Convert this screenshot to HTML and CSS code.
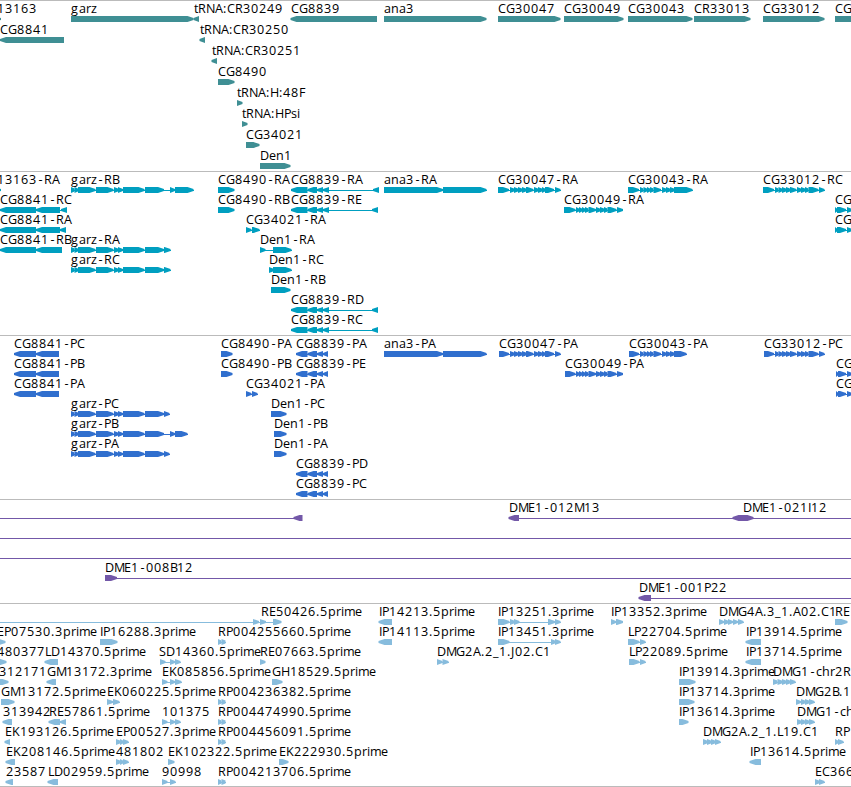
FILE: index.html
```html
<!DOCTYPE html>
<html lang="en">
<head>
    <meta charset="UTF-8">
    <meta name="viewport" content="width=device-width, initial-scale=1.0">
    <title>Genome Map</title>
    <link rel="stylesheet" href="styles.css">
</head>
<body>
    <div class="map">
        <section class="track gene" id="gene"></section>
        <section class="track transcript" id="transcript"></section>
        <section class="track cds" id="cds"></section>
        <section class="track bac" id="bac"></section>
        <section class="track est" id="est"></section>
    </div>
    <script src="script.js"></script>
</body>
</html>
```

FILE: styles.css
```css
body {
    margin: 0;
    background: #fff;
    overflow: hidden;
}
.map {
    width: 851px;
    border-bottom: 1px solid #bbb;
    overflow: hidden;
}
.track {
    display: flex;
    flex-direction: column;
    border-top: 1px solid #bbb;
    padding-bottom: 3px;
}
.row {
    display: block;
    width: 851px;
    height: 20px;
    overflow: visible;
}
.row text {
    font-family: "Open Sans", "Noto Sans", sans-serif;
    font-size: 12.6px;
    fill: #000;
}
.intron {
    shape-rendering: crispEdges;
}
.gene {
    fill: #3f8f94;
    padding-bottom: 2px;
}
.gene .row {
    height: 21px;
}
.transcript {
    fill: #009fc0;
}
.cds {
    fill: #306fce;
}
.bac {
    fill: #7358a8;
}
.est {
    fill: #87bcdd;
    padding-bottom: 2px;
}
```

FILE: script.js
```js
const NS = "http://www.w3.org/2000/svg";
const BAR_TOP = 15;
const BASELINE = 12;

// glyph advances in px, everything else is 8
const advance = {
    G: 9, M: 10, N: 9, D: 9, H: 9, E: 7, P: 7, B: 7, F: 7, S: 7, L: 6, I: 3, J: 4,
    a: 7, e: 7, c: 6, r: 5, z: 6, s: 6, t: 4, i: 3, m: 11, "-": 7, ".": 4, ":": 4, _: 6
};

const garz = [71, 74.5, 74.5, 78, 78, 95.5, 96, 113.5, 114, 118, 118, 123, 123, 144.5, 145, 164];
const cg8839 = [291, 307.5, 307.5, 317, 317, 323, 323, 329];
const cg8839p = [296, 307.5, 307.5, 317, 317, 323, 323, 328];
const mid47 = [510, 514, 514, 518, 518, 522, 522, 526, 526, 533.5, 534, 538, 538, 542, 542, 545, 545, 554, 555, 560.5];
const mid43 = [640, 643.5, 643.5, 647, 647, 650, 650, 653.5, 653.5, 661, 662, 666, 666, 670, 670, 674];
const mid49 = [576, 579, 579, 582, 582, 585, 585, 588.5, 588.5, 596, 596, 600, 600, 604, 604, 607.5, 607.5, 616.5, 617, 623];
const mid12 = [775, 778.5, 778.5, 782, 782, 786, 786, 790, 790, 796.5, 797, 801, 801, 805, 805, 808.5, 808.5, 818.5, 819, 824.5];
const est218 = [218, 221.5, 221.5, 225.5];

// feature: [label, label x, strand, [start, end, start, end, ...], line start, line end]
const tracks = {
    gene: [
        [["13163", -3, 1, [-8, 1]], ["garz", 71, 1, [71, 193.5]], ["tRNA:CR30249", 194, -1, [193.5, 199]],
         ["CG8839", 291, -1, [290.5, 377]], ["ana3", 384, 1, [384, 486.5]], ["CG30047", 498, 1, [498, 560.5]],
         ["CG30049", 564, 1, [564, 623.5]], ["CG30043", 628, 1, [628, 692.5]], ["CR33013", 694, 1, [694, 750.5]],
         ["CG33012", 763, 1, [763, 824.5]], ["CG", 835, 1, [835, 870]]],
        [["CG8841", 0, -1, [0, 64]], ["tRNA:CR30250", 200, -1, [199.5, 205]]],
        [["tRNA:CR30251", 212, -1, [211.5, 217]]],
        [["CG8490", 218, 1, [218, 234.5]]],
        [["tRNA:H:48F", 237, 1, [237, 242.5]]],
        [["tRNA:HPsi", 242, 1, [242, 247.5]]],
        [["CG34021", 246, 1, [246, 259.5]]],
        [["Den1", 260, 1, [260, 290.5]]]
    ],
    transcript: [
        [["13163-RA", -3, 1, [-8, 1]], ["garz-RB", 71, 1, [...garz, 170, 175, 175, 193.5]],
         ["CG8490-RA", 218, 1, [218, 234.5]], ["CG8839-RA", 291, -1, [...cg8839, 373, 379]],
         ["ana3-RA", 384, 1, [384, 443, 443, 486.5]], ["CG30047-RA", 498, 1, [498, 509, ...mid47]],
         ["CG30043-RA", 628, 1, [628, 639, ...mid43, 674, 692.5]], ["CG33012-RC", 763, 1, [763, 774, ...mid12]]],
        [["CG8841-RC", 0, -1, [0, 36, 36, 60, 61, 67]], ["CG8490-RB", 218, 1, [218, 234.5]],
         ["CG8839-RE", 291, -1, [...cg8839, 372, 378]], ["CG30049-RA", 564, 1, [564, 575.5, ...mid49]],
         ["CG", 835, 1, [835, 837, 837, 846, 847, 853]]],
        [["CG8841-RA", 0, -1, [0, 36, 36, 60, 60, 66]], ["CG34021-RA", 246, 1, [246, 251.5, 252, 259.5]],
         ["CG", 835, 1, [835, 837, 837, 846, 847, 853]]],
        [["CG8841-RB", 0, -1, [0, 36, 36, 62]], ["garz-RA", 71, 1, [...garz, 164, 170.5]],
         ["Den1-RA", 260, 1, [260, 265.5, 273, 291.5]]],
        [["garz-RC", 71, 1, [...garz, 164, 170.5]], ["Den1-RC", 269, 1, [269, 273, 273, 291.5]]],
        [["Den1-RB", 271, 1, [271, 290.5]]],
        [["CG8839-RD", 291, -1, [...cg8839, 372, 378]]],
        [["CG8839-RC", 291, -1, [...cg8839, 372, 378]]]
    ],
    cds: [
        [["CG8841-PC", 14, -1, [14, 36, 36, 59]], ["CG8490-PA", 221, 1, [221, 232.5]], ["CG8839-PA", 296, -1, cg8839p],
         ["ana3-PA", 384, 1, [384, 443, 443, 486.5]], ["CG30047-PA", 499, 1, [499, 509, ...mid47]],
         ["CG30043-PA", 629, 1, [629, 639, ...mid43, 674, 686.5]], ["CG33012-PC", 764, 1, [764, 774, ...mid12]]],
        [["CG8841-PB", 14, -1, [14, 36, 36, 59]], ["CG8490-PB", 221, 1, [221, 232.5]], ["CG8839-PE", 296, -1, cg8839p],
         ["CG30049-PA", 565, 1, [565, 575.5, ...mid49]], ["CG", 836, 1, [836, 838, 838, 846, 847, 853]]],
        [["CG8841-PA", 14, -1, [14, 36, 36, 59]], ["CG34021-PA", 246, 1, [246, 251.5, 252, 257.5]],
         ["CG", 836, 1, [836, 838, 838, 846, 847, 853]]],
        [["garz-PC", 71, 1, [...garz, 164, 169.5]], ["Den1-PC", 271, 1, [271, 286.5]]],
        [["garz-PB", 71, 1, [...garz, 170, 175, 175, 187.5]], ["Den1-PB", 274, 1, [274, 286.5]]],
        [["garz-PA", 71, 1, [...garz, 164, 169.5]], ["Den1-PA", 274, 1, [274, 286.5]]],
        [["CG8839-PD", 296, -1, cg8839p]],
        [["CG8839-PC", 296, -1, cg8839p]]
    ],
    bac: [
        [["", 0, -1, [293.5, 302.5], 0, 302], ["DME1-012M13", 509, -1, [508.5, 519], 509, 743],
         ["", 0, -1, [732.5, 743]], ["DME1-021I12", 743, 1, [743, 753.5], 743, 851]],
        [["", 0, 1, [], 0, 851]],
        [["", 0, 1, [], 0, 851]],
        [["DME1-008B12", 105, 1, [105, 117], 105, 851]],
        [["DME1-001P22", 639, -1, [638.5, 651], 639, 851]]
    ],
    est: [
        [["RE50426.5prime", 261, 1, [253, 259, 260, 266, 273, 281.5], 0, 281], ["IP14213.5prime", 379, -1, [378.5, 392]],
         ["IP13251.3prime", 498, 1, [498, 509.5, 510, 514, 514, 519.5, 548, 555, 555, 560.5]],
         ["IP13352.3prime", 611, 1, [611, 616, 616, 623]],
         ["DMG4A.3_1.A02.C1", 719, 1, [719, 724, 724, 728, 728, 733, 733, 738, 738, 743.5]], ["RE", 835, 1, [835, 847.5]]],
        [["EP07530.3prime", -3, 1, [-4, 5.5]], ["IP16288.3prime", 100, 1, [100, 117.5]], ["RP004255660.5prime", 218, 1, est218],
         ["IP14113.5prime", 379, -1, [378.5, 392]], ["IP13451.3prime", 498, 1, [498, 509.5, 551, 555, 555, 560.5]],
         ["LP22704.5prime", 628, 1, [628, 639.5, 640, 645.5]], ["IP13914.5prime", 746, -1, [745.5, 761]]],
        [["480377", -3, 1, [-4, 6.5]], ["LD14370.5prime", 45, -1, [44.5, 58]],
         ["SD14360.5prime", 159, 1, [160, 165.5, 170, 175, 175, 180.5]], ["RE07663.5prime", 260, 1, [260, 265.5]],
         ["DMG2A.2_1.J02.C1", 437, 1, [437, 442.5, 442.5, 448.5]], ["LP22089.5prime", 629, 1, [629, 639.5, 640, 645.5]],
         ["IP13714.5prime", 746, -1, [745.5, 761]]],
        [["312171", -1, 1, [-4, 8.5]], ["GM13172.3prime", 47, -1, [46.5, 56]],
         ["EK085856.5prime", 162, 1, [162, 167.5, 170, 175, 175, 181.5]], ["GH18529.5prime", 272, 1, [272, 282.5]],
         ["IP13914.3prime", 679, 1, [679, 695.5]],
         ["DMG1-chr2R", 773, 1, [773, 777.5, 777.5, 782, 782, 786, 786, 790, 790, 795.5]]],
        [["GM13172.5prime", 1, 1, [1, 14.5]], ["EK060225.5prime", 107, 1, [107, 113, 113, 119.5]],
         ["RP004236382.5prime", 218, 1, est218], ["IP13714.3prime", 679, 1, [679, 694.5]],
         ["DMG2B.1", 796, 1, [796, 801, 801, 805, 805, 809, 809, 814.5]]],
        [["313942", 3, -1, [2.5, 12]], ["RE57861.5prime", 49, -1, [48.5, 60, 60, 66]],
         ["101375", 162, 1, [162, 167.5, 170, 175, 175, 180.5]], ["RP004474990.5prime", 218, 1, est218],
         ["IP13614.3prime", 679, 1, [679, 688.5]],
         ["DMG1-ch", 797, 1, [797, 801, 801, 805, 805, 809, 809, 814.5]]],
        [["EK193126.5prime", 5, -1, [4.5, 10]], ["EP00527.3prime", 116, 1, [116, 120, 120, 123, 123, 128.5]],
         ["RP004456091.5prime", 218, 1, est218],
         ["DMG2A.2_1.L19.C1", 703, 1, [703, 707, 707, 711, 711, 715, 715, 720.5]], ["RP", 835, 1, [835, 838, 838, 843.5]]],
        [["EK208146.5prime", 6, -1, [5.5, 15]], ["481802", 116, 1, [116, 120, 120, 123, 123, 128.5]],
         ["EK102322.5prime", 168, 1, [168, 174.5]], ["EK222930.5prime", 279, 1, [279, 288.5]],
         ["IP13614.5prime", 750, -1, [749.5, 761]]],
        [["23587", 6, -1, [5.5, 13]], ["LD02959.5prime", 48, -1, [47.5, 58]],
         ["90998", 162, 1, [162, 167.5, 170, 175.5]], ["RP004213706.5prime", 218, 1, est218],
         ["EC366", 815, 1, [815, 819, 819, 824.5]]]
    ]
};

function add(parent, name, attrs) {
    const el = document.createElementNS(NS, name);
    for (const key in attrs) {
        el.setAttribute(key, attrs[key]);
    }
    parent.appendChild(el);
    return el;
}

// box with a pointed end on the strand side, short exons get a blunter tip
function arrow(start, end, strand) {
    const head = Math.min(6, end - start);
    const tip = strand > 0 ? end : start;
    const back = strand > 0 ? start : end;
    const neck = tip - head * strand;
    const blunt = head < 5 ? 1.6 : 0.9;
    const t = BAR_TOP, b = BAR_TOP + 6, m = BAR_TOP + 3;
    return `${back},${t} ${neck},${t} ${tip},${m - blunt} ${tip},${m + blunt} ${neck},${b} ${back},${b}`;
}

function drawFeature(svg, [label, x, strand, exons, from, to]) {
    if (from === undefined) {
        from = exons[0];
        to = exons[exons.length - 1];
    }
    if (exons.length !== 2 || to > exons[1] || from < exons[0]) {
        add(svg, "rect", { class: "intron", x: from, y: BAR_TOP + 3, width: to - from, height: 1 });
    }
    for (let i = 0; i < exons.length; i += 2) {
        add(svg, "polygon", { points: arrow(exons[i], exons[i + 1], strand) });
    }
    if (label) {
        const xs = [];
        for (const ch of label) {
            xs.push(ch === "-" ? x + 1.5 : x);
            x += advance[ch] || 8;
        }
        add(svg, "text", { x: xs.join(" "), y: BASELINE }).textContent = label;
    }
}

for (const id in tracks) {
    const track = document.getElementById(id);
    tracks[id].forEach(features => {
        const svg = add(track, "svg", { class: "row" });
        features.forEach(feature => drawFeature(svg, feature));
    });
}
```
